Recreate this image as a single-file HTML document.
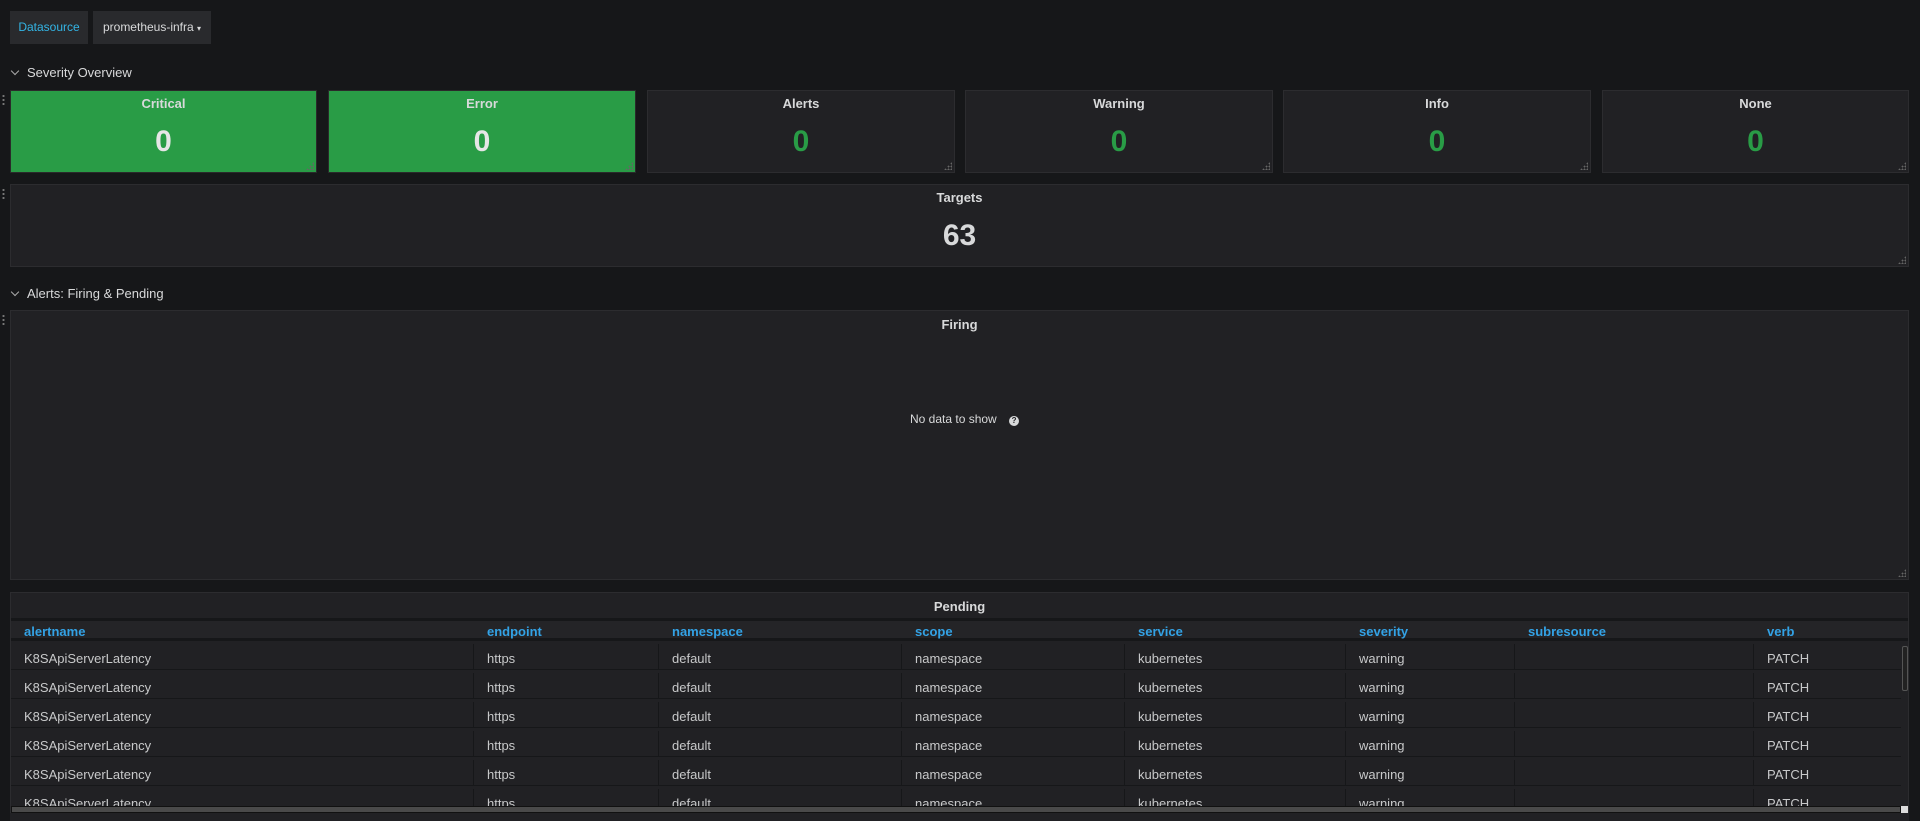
<!DOCTYPE html>
<html><head><meta charset="utf-8"><style>
*{box-sizing:border-box;margin:0;padding:0}
body{width:1920px;height:821px;background:#161719;font-family:"Liberation Sans",sans-serif;color:#d8d9da;position:relative;overflow:hidden}
.abs{position:absolute}
.btn{position:absolute;top:11px;height:33px;background:#292a2d;font-size:12px;line-height:33px;text-align:center}
.row-h{position:absolute;left:12px;font-size:13px;color:#d8d9da}
.row-h .chev{display:inline-block;width:6px;height:6px;border-right:1.5px solid #aaa;border-bottom:1.5px solid #aaa;transform:rotate(45deg);margin-right:9px;position:relative;top:-3px}
.panel{position:absolute;background:#212124;border:1px solid #2c2c2f}
.panel.g{background:#299c46;border-color:#2a2a2a}
.pt{position:absolute;left:0;right:0;text-align:center;font-size:13px;font-weight:bold;color:#d8d9da}
.pv{position:absolute;left:0;right:0;text-align:center;font-size:30px;font-weight:bold;color:#299c46}
.g .pv{color:#e6e6e6}
.grip{position:absolute;right:2px;bottom:2px;width:8px;height:8px;background:radial-gradient(circle,#666 0.8px,transparent 1px) 0 0/3px 3px;clip-path:polygon(100% 0,100% 100%,0 100%)}
.drag{position:absolute;left:2px;width:3px;height:13px;background:radial-gradient(circle,#777 1px,transparent 1.2px) 0 0/3px 4px}
.th{position:absolute;top:618px;height:22px;font-size:13px;font-weight:bold;color:#33a2e5;line-height:28px}
.td{position:absolute;font-size:13px;color:#c8c9ca}
</style></head><body>
<div class="btn" style="left:10px;width:78px;color:#33b5e5">Datasource</div>
<div class="btn" style="left:93px;width:118px">prometheus-infra <span style="font-size:8px">▾</span></div>

<div class="row-h" style="top:65px"><span class="chev"></span>Severity Overview</div>

<div class="drag" style="top:94px"></div>
<div class="panel g" style="left:10px;top:90px;width:307px;height:83px"><div class="pt" style="top:5px">Critical</div><div class="pv" style="top:34px">0</div><div class="grip"></div></div>
<div class="panel g" style="left:328px;top:90px;width:308px;height:83px"><div class="pt" style="top:5px">Error</div><div class="pv" style="top:34px">0</div><div class="grip"></div></div>
<div class="panel" style="left:647px;top:90px;width:308px;height:83px"><div class="pt" style="top:5px">Alerts</div><div class="pv" style="top:34px">0</div><div class="grip"></div></div>
<div class="panel" style="left:965px;top:90px;width:308px;height:83px"><div class="pt" style="top:5px">Warning</div><div class="pv" style="top:34px">0</div><div class="grip"></div></div>
<div class="panel" style="left:1283px;top:90px;width:308px;height:83px"><div class="pt" style="top:5px">Info</div><div class="pv" style="top:34px">0</div><div class="grip"></div></div>
<div class="panel" style="left:1602px;top:90px;width:307px;height:83px"><div class="pt" style="top:5px">None</div><div class="pv" style="top:34px">0</div><div class="grip"></div></div>

<div class="drag" style="top:188px"></div>
<div class="panel" style="left:10px;top:184px;width:1899px;height:83px"><div class="pt" style="top:5px">Targets</div><div class="pv" style="top:34px;color:#d8d9da">63</div><div class="grip"></div></div>

<div class="row-h" style="top:286px"><span class="chev"></span>Alerts: Firing &amp; Pending</div>

<div class="drag" style="top:314px"></div>
<div class="panel" style="left:10px;top:310px;width:1899px;height:270px">
<div class="pt" style="top:6px">Firing</div>
<div class="abs" style="left:899px;top:101px;font-size:12px;color:#d8d9da">No data to show <span style="display:inline-block;width:10px;height:10px;border-radius:50%;background:#d8d9da;color:#212124;font-size:8px;line-height:10px;text-align:center;font-weight:bold;margin-left:9px">?</span></div>
<div class="grip"></div>
</div>

<div class="panel" style="left:10px;top:592px;width:1899px;height:228px;overflow:hidden">
<div class="pt" style="top:6px">Pending</div>
<div class="abs" style="left:0;right:0;top:25px;height:23px;background:#242427;border-top:3px solid #161719;border-bottom:3px solid #161719"></div>
</div>
<div class="th" style="left:24px">alertname</div>
<div class="th" style="left:487px">endpoint</div>
<div class="th" style="left:672px">namespace</div>
<div class="th" style="left:915px">scope</div>
<div class="th" style="left:1138px">service</div>
<div class="th" style="left:1359px">severity</div>
<div class="th" style="left:1528px">subresource</div>
<div class="th" style="left:1767px">verb</div>

<div id="rows"></div>
<script>
var cols=[24,487,672,915,1138,1359,1528,1767];
var vals=["K8SApiServerLatency","https","default","namespace","kubernetes","warning","","PATCH"];
var h="";
for(var r=0;r<6;r++){
 var y0=641+r*29;
 h+='<div class="abs" style="left:11px;width:1890px;top:'+(y0+28)+'px;height:1px;background:#161719"></div>';
 for(var c=0;c<8;c++){
  if(c>0)h+='<div class="abs" style="left:'+(cols[c]-14)+'px;top:'+(y0+3)+'px;width:1px;height:26px;background:#161719"></div>';
  h+='<div class="td" style="left:'+cols[c]+'px;top:'+(y0+10)+'px">'+vals[c]+'</div>';
 }
}
document.getElementById('rows').innerHTML=h;
</script>
<div class="abs" style="left:10px;top:813px;width:1899px;height:8px;background:#212124"></div>
<div class="abs" style="left:11px;top:806px;width:1890px;height:7px;background:#4a4a4a;border:1px solid #111"></div>
<div class="abs" style="left:1902px;top:646px;width:6px;height:45px;background:#222;border:1px solid #555;border-radius:2px"></div>
<div class="abs" style="left:1901px;top:806px;width:7px;height:7px;background:#ddd"></div>
</body></html>
